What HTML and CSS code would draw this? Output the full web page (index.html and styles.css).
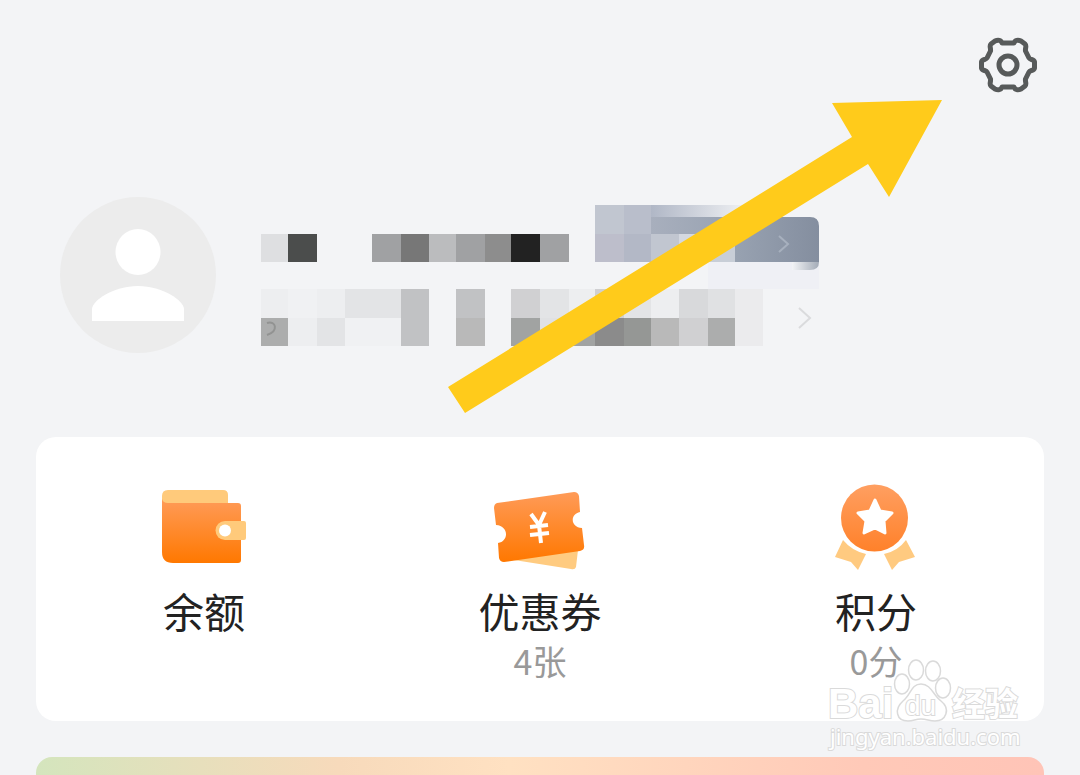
FILE: index.html
```html
<!DOCTYPE html>
<html lang="zh-CN">
<head>
  <meta charset="UTF-8">
  <meta name="viewport" content="width=device-width, initial-scale=1.0">
  <title>我的</title>
  <link rel="stylesheet" href="styles.css">
</head>

<body>
  <div class="page">
    <header class="topbar">
      <button class="settings-btn" type="button" aria-label="设置">
        <svg viewBox="978 35 60 60" fill="none" stroke="#575a5a" stroke-width="5" stroke-linejoin="round">
          <path d="M1002 43H1014C1015 40 1018 39.500 1021 41L1025 44C1027 46 1025 48 1025.500 51L1029 58C1030 60 1034 59 1034.500 62V68C1034 71 1030 70 1029 72L1025.500 79C1025 82 1027 84 1025 86L1021 89C1018 90.500 1015 90 1014 87H1002C1001 90 998 90.500 995 89L991 86C989 84 991 82 990.500 79L987 72C986 70 982 71 981.500 68V62C982 59 986 60 987 58L990.500 51C991 48 989 46 991 44L995 41C998 39.500 1001 40 1002 43Z"/>
          <circle cx="1008" cy="65" r="9"/>
        </svg>
      </button>
    </header>

    <section class="profile">
      <svg class="avatar" viewBox="0 0 156 156">
        <circle cx="78" cy="78" r="78" fill="#ececec"/>
        <ellipse cx="78" cy="55" rx="22.500" ry="23" fill="#fff"/>
        <path d="M32 124V112C32 104 53 89 78 89S124 104 124 112V124Z" fill="#fff"/>
      </svg>

      <!-- masked name, member badge and phone -->
      <svg class="masked" viewBox="261 204 560 142">
        <defs>
          <linearGradient id="badge" x1="0" x2="1">
            <stop offset="0" stop-color="#a8afbd"/>
            <stop offset=".5" stop-color="#98a2b1"/>
            <stop offset="1" stop-color="#848e9f"/>
          </linearGradient>
          <linearGradient id="fade" x1="0" x2="1">
            <stop offset="0" stop-color="#b0b7c6"/>
            <stop offset="1" stop-color="#f3f4f6"/>
          </linearGradient>
          <linearGradient id="corner" x1="0" x2="1">
            <stop offset="0" stop-color="#f3f4f6"/>
            <stop offset="1" stop-color="#a3abb7"/>
          </linearGradient>
        </defs>
        <g shape-rendering="crispEdges">
          <path fill="#dedfe1" d="M261 234h27v28h-27z"/>
          <path fill="#4b4d4c" d="M288 234h29v28h-29z"/>
          <path fill="#a0a1a3" d="M372 234h29v28h-29zM456 234h29v28h-29zM540 234h29v28h-29z"/>
          <path fill="#777" d="M401 234h28v28h-28z"/>
          <path fill="#bbbcbe" d="M429 234h27v28h-27z"/>
          <path fill="#8d8d8d" d="M485 234h26v28h-26z"/>
          <path fill="#222" d="M511 234h29v28h-29z"/>

          <path fill="#edeef0" d="M261 289h27v29h-27zM317 289h28v29h-28zM288 318h29v28h-29zM569 289h26v29h-26zM651 289h28v29h-28z"/>
          <path fill="#f0f1f3" d="M288 289h29v29h-29zM345 318h56v28h-56z"/>
          <path fill="#e3e4e6" d="M345 289h56v29h-56zM317 318h28v28h-28zM540 289h29v29h-29zM624 289h27v29h-27z"/>
          <path fill="#c1c2c4" d="M401 289h28v57h-28zM456 289h29v29h-29z"/>
          <path fill="#b9b9b9" d="M456 318h29v28h-29zM651 318h28v28h-28z"/>
          <path fill="#d0d0d2" d="M511 289h29v29h-29zM595 289h29v29h-29zM679 318h29v28h-29z"/>
          <path fill="#a1a3a2" d="M511 318h29v28h-29zM569 318h26v28h-26z"/>
          <path fill="#acadad" d="M261 318h27v28h-27zM708 318h27v28h-27z"/>
          <path fill="#8b8b8b" d="M595 318h29v28h-29z"/>
          <path fill="#959795" d="M624 318h27v28h-27z"/>
          <path fill="#d8d9db" d="M679 289h29v29h-29z"/>
          <path fill="#e0e1e3" d="M708 289h27v29h-27zM540 318h29v28h-29z"/>
          <path fill="#ebebed" d="M735 289h28v57h-28z"/>
          <path fill="#eff0f5" d="M708 262h111v27h-111z"/>
        </g>
        <path fill="url(#fade)" d="M651 205h100v14h-100z"/>
        <path fill="url(#badge)" d="M651 217H810Q819 217 819 226V262H735V234H651Z"/>
        <path fill="url(#corner)" d="M792 262H819Q819 270 810 270H792Z"/>
        <g shape-rendering="crispEdges">
          <path fill="#c1c6d0" d="M595 205h29v29h-29zM651 234h28v28h-28z"/>
          <path fill="#b9becb" d="M624 205h27v29h-27z"/>
          <path fill="#bdbecb" d="M595 234h29v28h-29z"/>
          <path fill="#b3b8c6" d="M624 234h27v28h-27z"/>
          <path fill="#d4d8e0" d="M679 234h29v28h-29z"/>
          <path fill="#c8ced7" d="M708 234h27v28h-27z"/>
        </g>
        <g fill="none" stroke-width="2">
          <path stroke="#a7b0be" d="M779 236L788 244L779 252"/>
          <path stroke="#dadbdd" d="M799 308L810 318L799 328"/>
          <path stroke="#929392" d="M267 323C276 320 279 331 267 335"/>
        </g>
      </svg>
    </section>

    <section class="assets">
      <a class="asset" href="#">
        <svg class="asset-icon" viewBox="159 482 90 90">
          <defs>
            <linearGradient id="orange" x1="0" y1="0" x2="0" y2="1">
              <stop offset="0" stop-color="#ff9b58"/>
              <stop offset="1" stop-color="#ff7800"/>
            </linearGradient>
          </defs>
          <path fill="#ffca7b" d="M162 510V496Q162 490 168 490H223Q228 490 228 495V510Z"/>
          <path fill="url(#orange)" d="M162 499Q163 503 168 503H238Q241 503 241 506V560Q241 563 238 563H173Q162 563 162 552Z"/>
          <path fill="#ffca7b" d="M225 521H244Q246 521 246 523V538Q246 540 244 540H225A9.500 9.500 0 0 1 225 521Z"/>
          <circle cx="225" cy="530.500" r="6" fill="#fff"/>
        </svg>
        <span class="asset-name">余额</span>
      </a>
      <a class="asset" href="#">
        <svg class="asset-icon" viewBox="495 482 90 90">
          <path fill="#ffcb80" d="M514 560L578 550L576 567Q575 570 571 569Z"/>
          <path fill="url(#orange)" d="M497 503L574 492Q578 492 579 496L580 512C570 514 570 527 582 528L584 545Q585 550 580 551L504 562Q500 562 499 558L498 543C509 541 509 526 496 525L494 508Q494 504 497 503Z"/>
          <path fill="none" stroke="#fff" stroke-width="4" d="M531 514L539 525M545 512L539 525L541 543M530 527L548 525M530 535L549 533"/>
        </svg>
        <span class="asset-name">优惠券</span>
        <span class="asset-value">4张</span>
      </a>
      <a class="asset" href="#">
        <svg class="asset-icon" viewBox="831 482 90 90">
          <defs>
            <linearGradient id="medal" x1="0" y1="0" x2="0" y2="1">
              <stop offset="0" stop-color="#ff9f61"/>
              <stop offset="1" stop-color="#ff812a"/>
            </linearGradient>
          </defs>
          <path fill="#ffca80" d="M843 540Q852 551 866 554L858 570L851 562L835 557ZM906 540Q898 551 884 554L892 570L899 562L915 557Z"/>
          <circle cx="874.500" cy="518" r="33.500" fill="url(#medal)"/>
          <path fill="#fff" stroke="#fff" stroke-width="3" stroke-linejoin="round" d="M875 500L880 511L892 513L884 521L885 533L875 528L864 533L866 521L858 513L870 511Z"/>
        </svg>
        <span class="asset-name">积分</span>
        <span class="asset-value">0分</span>
      </a>
    </section>

    <section class="banner"></section>

    <svg class="arrow" viewBox="448 100 494 313">
      <path fill="#ffcb1b" d="M448 387L852 137L832 103L942 100L889 197L868 164L465 413Z"/>
    </svg>

    <svg class="watermark" viewBox="824 656 200 96">
      <g fill="#fff" stroke="#dadada" stroke-width="1.500">
        <ellipse cx="902" cy="684" rx="7.500" ry="10"/>
        <ellipse cx="916" cy="670" rx="7.500" ry="10"/>
        <ellipse cx="933" cy="671" rx="7.500" ry="10"/>
        <ellipse cx="943" cy="688" rx="7.500" ry="10"/>
        <path d="M921 684C931 684 933 695 941 701C951 709 946 721 935 721C929 721 927 719 921 719S914 721 908 721C896 721 894 709 903 701C911 695 911 684 921 684Z"/>
      </g>
      <g class="mark-text">
        <text class="mark-brand" x="828" y="718">Bai</text>
        <text class="mark-du" x="905" y="715">du</text>
        <text class="mark-cn" x="952" y="716">经验</text>
        <text class="mark-url" x="830" y="745">jingyan.baidu.com</text>
      </g>
    </svg>
  </div>
</body>
</html>
```
FILE: styles.css
```css
* {
  margin: 0;
  padding: 0;
  box-sizing: border-box;
}

body {
  background: #f3f4f6;
  font-family: "Noto Sans CJK SC", sans-serif;
  color: #222;
}

.page {
  position: relative;
  min-height: 100vh;
  padding: 35px 36px 0;
  display: flex;
  flex-direction: column;
  overflow: hidden;
}

.topbar {
  display: flex;
  justify-content: flex-end;
  padding-right: 6px;
}

.settings-btn {
  width: 60px;
  height: 60px;
  border: none;
  background: none;
  cursor: pointer;
}

.settings-btn svg {
  display: block;
  width: 100%;
}

.profile {
  display: flex;
  align-items: center;
  gap: 45px;
  margin-top: 102px;
  padding: 0 24px;
}

.avatar {
  width: 156px;
  height: 156px;
  flex: none;
}

.masked {
  width: 560px;
  height: 142px;
}

.assets {
  display: grid;
  grid-template-columns: repeat(3, 1fr);
  margin-top: 84px;
  padding: 45px 0 39px;
  background: #fff;
  border-radius: 20px;
}

.asset {
  display: flex;
  flex-direction: column;
  align-items: center;
  color: inherit;
  text-decoration: none;
}

.asset-icon {
  width: 90px;
  height: 90px;
  margin-bottom: 8px;
  overflow: visible;
}

.asset-name {
  font-size: 41px;
  line-height: 60px;
}

.asset-value {
  font-size: 34px;
  line-height: 42px;
  color: #999;
}

.banner {
  flex: 1;
  min-height: 18px;
  margin-top: 36px;
  border-radius: 16px 16px 0 0;
  background: linear-gradient(90deg, #d4e5bd 0%, #f7dabb 30%, #ffe1c2 47%, #ffc9b8 82%, #ffc4b7 100%);
}

/* pointer to the settings button */
.arrow {
  position: absolute;
  top: 100px;
  right: 138px;
  width: 494px;
  height: 313px;
  pointer-events: none;
}

.watermark {
  position: absolute;
  top: 656px;
  right: 56px;
  width: 200px;
  height: 96px;
  pointer-events: none;
}

.mark-text {
  fill: #fff;
  stroke: #dadada;
  stroke-width: 2px;
  paint-order: stroke;
}

.mark-brand {
  font: bold 42px "Liberation Sans", sans-serif;
}

.mark-du {
  font: 28px "Liberation Sans", sans-serif;
}

.mark-cn {
  font: bold 33px "Noto Sans CJK SC", sans-serif;
}

.mark-url {
  font: 22px "Noto Sans", sans-serif;
}
```
